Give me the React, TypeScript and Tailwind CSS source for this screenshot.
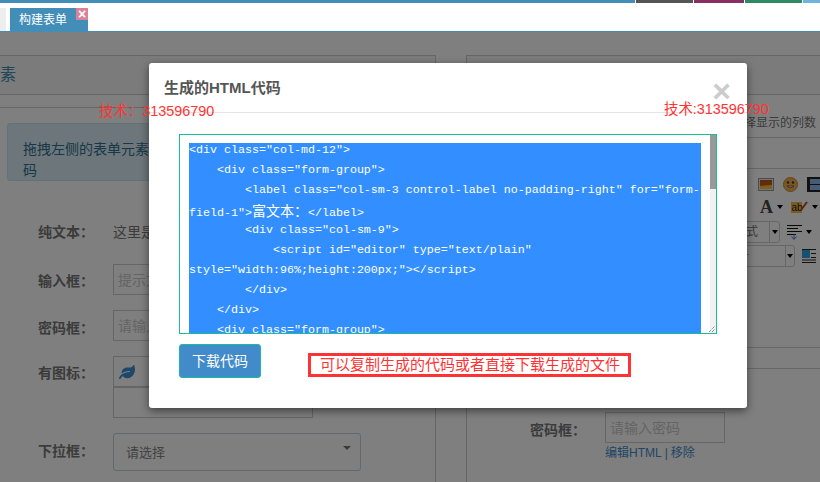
import { FaLeaf } from "react-icons/fa";

const codeLines = [
  <>{'<div class="col-md-12">'}</>,
  <>{'    <div class="form-group">'}</>,
  <>{'        <label class="col-sm-3 control-label no-padding-right" for="form-'}</>,
  <>{'field-1">'}<span className="text-[14px] font-['Noto_Sans_CJK_SC',sans-serif]">富文本：</span>{'</label>'}</>,
  <>{'        <div class="col-sm-9">'}</>,
  <>{'            <script id="editor" type="text/plain"'}</>,
  <>{'style="width:96%;height:200px;"></script>'}</>,
  <>{'        </div>'}</>,
  <>{'    </div>'}</>,
  <>{'    <div class="form-group">'}</>,
];

function Caret({ className = "" }: { className?: string }) {
  return <span className={"block h-0 w-0 border-x-[3px] border-t-[4px] border-x-transparent border-t-black " + className} />;
}

function FormRow({ label, labelClass, children }: { label: string; labelClass: string; children: React.ReactNode }) {
  return (
    <div className="flex">
      <label className={"w-[75px] shrink-0 text-[14px] font-bold leading-[18px] text-[#777] " + labelClass}>{label}</label>
      {children}
    </div>
  );
}

function LeftPanel() {
  return (
    <section className="mt-[23px] h-[500px] w-[436px] shrink-0 overflow-hidden border-t border-r border-[#ccc]">
      <div className="h-[39px] border-b border-[#ccc] bg-[#f7f7f7]">
        <h4 className="-ml-[48px] text-[16px] leading-[38px] text-[#438eb9]">表单元素</h4>
      </div>
      <div className="mt-[12px] border-t border-[#ccc]" />
      <div className="ml-[7px] mt-[15px] h-[58px] w-[400px] rounded-[3px] border border-[#bce8f1] bg-[#d9edf7] px-[15px] pt-[15px] text-[14px] leading-[21px] text-[#31708f]">
        拖拽左侧的表单元素到右侧区
        <br />码
      </div>
      <div className="ml-[38px] mt-[37px] flex flex-col gap-[15px]">
        <FormRow label="纯文本：" labelClass="pt-[5px]">
          <span className="h-[31px] pt-[5px] text-[14px] leading-[18px] text-[#777]">这里是纯文本</span>
        </FormRow>
        <FormRow label="输入框：" labelClass="pt-[8px]">
          <div className="h-[31px] w-[200px] border border-[#ccc] px-[4px] pt-[5px] text-[14px] leading-[20px] text-[#c8c8c8]">提示文字</div>
        </FormRow>
        <FormRow label="密码框：" labelClass="pt-[9px]">
          <div className="h-[31px] w-[200px] border border-[#ccc] px-[4px] pt-[5px] text-[14px] leading-[20px] text-[#c8c8c8]">请输入密码</div>
        </FormRow>
        <FormRow label="有图标：" labelClass="pt-[8px]">
          <div className="w-[200px]">
            <div className="flex h-[31px] items-center border border-[#ccc] pl-[5px]">
              <FaLeaf size={16} className="text-[#3f8fd0]" />
            </div>
            <div className="h-[31px] border border-[#ccc]" />
          </div>
        </FormRow>
        <FormRow label="下拉框：" labelClass="pt-[9px]">
          <div className="relative h-[38px] w-[248px] rounded-[3px] border border-[#c5d0dc] pl-[12px] text-[13px] leading-[37px] text-[#858585]">
            请选择
            <span className="absolute right-[9px] top-[12px] h-0 w-0 border-x-[4px] border-t-[4px] border-x-transparent border-t-[#777]" />
          </div>
        </FormRow>
      </div>
    </section>
  );
}

function Toolbar() {
  return (
    <div className="flex flex-col items-end">
      <div className="mt-[7px] flex h-[16px] items-center gap-[9px]">
        <svg width="16" height="13" viewBox="0 0 16 13">
          <rect x="0.5" y="0.5" width="15" height="12" fill="#e8e8e8" stroke="#999" />
          <rect x="2" y="2" width="12" height="9" fill="#c05a10" />
          <path d="M2 8 L14 7 V11 H2 Z" fill="#ffc040" />
        </svg>
        <svg width="15" height="15" viewBox="0 0 15 15">
          <circle cx="7.5" cy="7.5" r="7" fill="#f0b050" stroke="#c8882a" />
          <circle cx="5" cy="5.5" r="1.2" fill="#503010" />
          <circle cx="10" cy="5.5" r="1.2" fill="#503010" />
          <path d="M4 9 Q7.5 12.5 11 9 Z" fill="#fff" stroke="#503010" strokeWidth="0.7" />
        </svg>
        <svg width="13" height="15" viewBox="0 0 13 15">
          <rect x="0" y="0" width="13" height="15" fill="#222" />
          <rect x="3" y="2" width="10" height="5" fill="#8fb8ea" />
          <rect x="3" y="8" width="10" height="5" fill="#8fb8ea" />
        </svg>
      </div>
      <div className="mr-[2px] mt-[7px] flex h-[16px] items-center">
        <span className="font-['Liberation_Serif',serif] text-[18px] font-bold leading-[16px] text-[#444]">A</span>
        <Caret className="ml-[4px] mr-[8px]" />
        <svg width="17" height="14" viewBox="0 0 17 14">
          <rect x="0" y="2" width="11" height="11" fill="#f5b942" />
          <text x="0.5" y="11" fontSize="10" fill="#222" fontFamily="Liberation Sans">ab</text>
          <path d="M10 10 L16 2" stroke="#c04030" strokeWidth="2" />
        </svg>
        <Caret className="ml-[4px]" />
      </div>
      <div className="mr-[8px] mt-[6px] flex h-[22px] items-center">
        <div className="flex h-[22px] w-[60px] rounded-[3px] border border-[#ccc]">
          <span className="flex-1 pr-[11px] text-right text-[12px] leading-[20px] text-[#777]">样式</span>
          <span className="flex w-[10px] items-center justify-center border-l border-[#ccc]"><Caret /></span>
        </div>
        <svg width="15" height="16" viewBox="0 0 15 16" className="ml-[7px]">
          <path d="M0 1.5H15M0 4.5H11M0 7.5H15M0 10.5H9" stroke="#111" />
          <path d="M7 10V15M4.5 12.5L7 15.5L9.5 12.5" stroke="#4a80d8" fill="none" />
        </svg>
        <Caret className="ml-[4px]" />
      </div>
      <div className="mr-[4px] mt-[2px] flex h-[22px] items-center">
        <div className="flex h-[22px] w-[74px] rounded-[3px] border border-[#ccc]">
          <span className="flex-1 pr-[36px] text-right text-[12px] leading-[20px] text-[#777]">字号</span>
          <span className="flex w-[9px] items-center justify-center border-l border-[#ccc]"><Caret /></span>
        </div>
        <svg width="14" height="14" viewBox="0 0 14 14" className="ml-[7px]">
          <rect x="0" y="1" width="8" height="8" fill="#30a0e0" />
          <path d="M0 0.5H14M9 4.5H14M9 8.5H14M0 11H14M0 13.5H14" stroke="#222" />
        </svg>
      </div>
    </div>
  );
}

function RightPanel() {
  return (
    <section className="ml-[30px] mt-[23px] h-[500px] flex-1 overflow-hidden border-t border-l border-[#ccc]">
      <div className="h-[39px] border-b border-[#ccc] bg-[#f7f7f7]" />
      <div className="h-[43px] border-b border-[#ccc] pr-[4px] pt-[18px] text-right text-[12px] leading-[20px] text-[#777]">请选择显示的列数</div>
      <div className="h-[31px] border-b border-[#ccc]" />
      <Toolbar />
      <div className="mt-[80px] h-[22px] border-y border-[#ccc]" />
      <div className="ml-[63px] mt-[43px] flex">
        <label className="w-[75px] pt-[9px] text-[14px] font-bold leading-[18px] text-[#777]">密码框：</label>
        <div>
          <div className="h-[31px] w-[120px] border border-[#ccc] px-[4px] pt-[5px] text-[14px] leading-[20px] text-[#c8c8c8]">请输入密码</div>
          <div className="mt-[1px] text-[12px] leading-[18px] text-[#428bca]">编辑HTML<span className="mx-[3px]">|</span>移除</div>
        </div>
      </div>
    </section>
  );
}

function CodeModal() {
  return (
    <div className="absolute left-[149px] top-[31px] h-[345px] w-[598px] rounded-[3px] bg-white shadow-[0_3px_9px_rgba(0,0,0,0.5)]">
      <div className="relative h-[50px] border-b border-[#e5e5e5] pl-[15px] pt-[14px] text-[15px] font-bold leading-[22px] text-[#555]">
        生成的HTML代码
        <span className="absolute right-[16px] top-[12px] font-['Liberation_Sans',sans-serif] text-[32px] font-bold leading-[32px] text-[#ccc]">×</span>
      </div>
      <div className="px-[30px] pt-[21px]">
        <div className="relative h-[200px] w-[538px] overflow-hidden border border-[#1abc9c] pl-[9px] pt-[8px]">
          <div className="h-[190px] w-[512px] overflow-hidden bg-[#338fff] font-['Liberation_Mono',monospace] text-[11.67px] leading-[15px] text-white">
            {codeLines.map((line, i) => (
              <div key={i} className="h-[20px] whitespace-pre">{line}</div>
            ))}
          </div>
          <div className="absolute bottom-0 right-0 top-0 w-[6px] bg-[#f1f1f1]">
            <div className="h-[54px] bg-[#999]" />
          </div>
          <svg width="8" height="8" viewBox="0 0 8 8" className="absolute bottom-0 right-0">
            <path d="M1 7L7 1M4 7L7 4" stroke="#666" strokeDasharray="1 1" />
          </svg>
        </div>
        <div className="mt-[10px] flex items-start">
          <button className="h-[34px] w-[82px] rounded-[3px] border border-[#1abc9c] bg-[#428bca] text-[14px] text-white">下载代码</button>
          <div className="ml-[47px] mt-[9px] h-[24px] w-[323px] border-[3px] border-[#ff3333] pl-[9px] text-[15px] leading-[18px] text-[#ff3333]">
            可以复制生成的代码或者直接下载生成的文件
          </div>
        </div>
      </div>
      <span className="absolute left-[-50px] top-[39px] whitespace-nowrap text-[14.4px] leading-[18px] text-[#ff3333]">技术：313596790</span>
      <span className="absolute left-[515px] top-[37px] whitespace-nowrap text-[14.4px] leading-[18px] text-[#ff3333]">技术:313596790</span>
    </div>
  );
}

export default function App() {
  return (
    <div className="relative h-[482px] w-[820px] overflow-hidden bg-white font-['Liberation_Sans','Noto_Sans_CJK_SC',sans-serif]">
      <div className="flex h-[3px] gap-[1px]">
        <div className="w-[635px] bg-[#438eb9]" />
        <div className="w-[57px] bg-[#555]" />
        <div className="w-[50px] bg-[#892e65]" />
        <div className="w-[57px] bg-[#2e8965]" />
        <div className="flex-1 bg-[#6fb3e0]" />
      </div>
      <div className="flex h-[29px] items-end gap-[4px] border-b border-[#438eb9] pt-[5px]">
        <div className="h-[23px] w-[6px] bg-[#eeeeee]" />
        <div className="relative h-[23px] w-[78px] bg-[#438eb9] pl-[9px] text-[12px] leading-[24px] text-white">
          构建表单
          <span className="absolute right-0 top-0 flex h-[12px] w-[12px] items-center justify-center bg-[#d9829a] text-[14px] font-bold leading-[12px] text-white">×</span>
        </div>
      </div>
      <div className="relative h-[450px]">
        <div className="flex h-full overflow-hidden">
          <LeftPanel />
          <RightPanel />
        </div>
        <div className="absolute inset-0 bg-black/50" />
        <CodeModal />
      </div>
    </div>
  );
}
